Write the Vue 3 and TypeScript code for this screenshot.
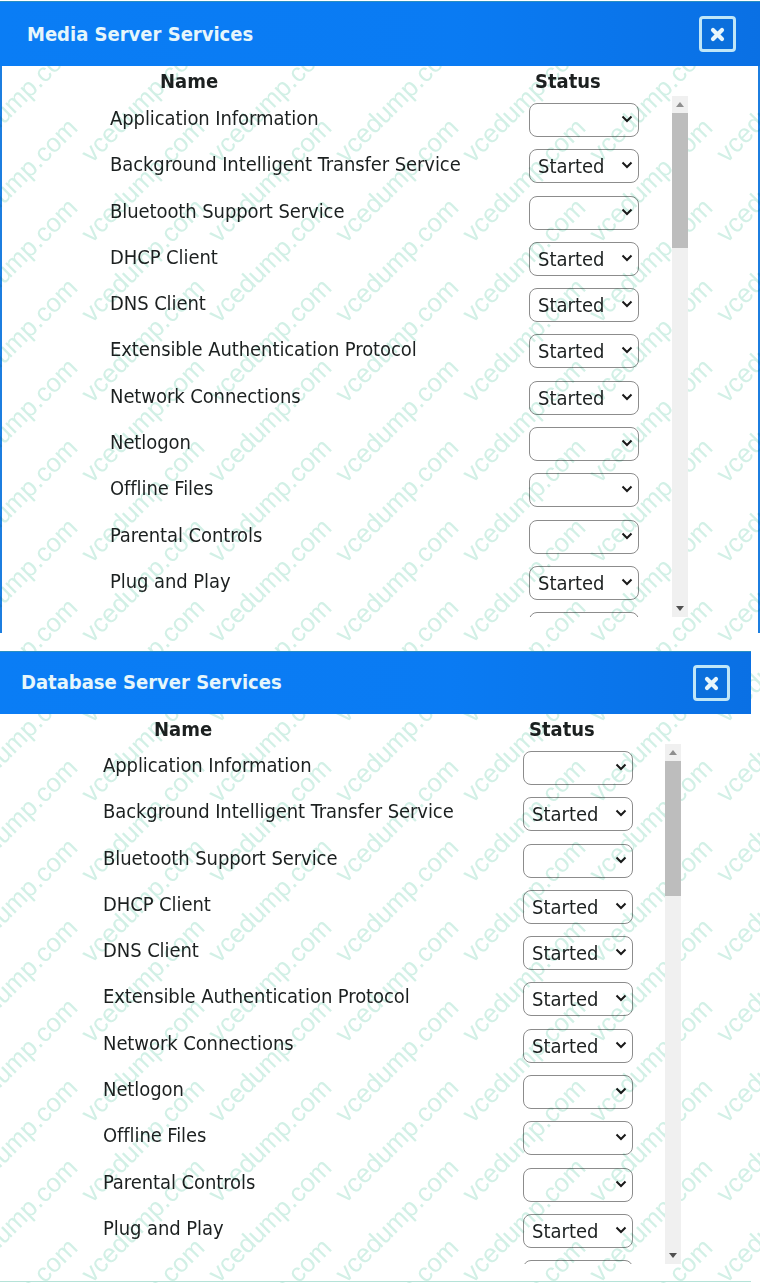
<script setup lang="ts">
interface Row { name: string; status: string }
const rows: Row[] = [
  { name: 'Application Information', status: '' },
  { name: 'Background Intelligent Transfer Service', status: 'Started' },
  { name: 'Bluetooth Support Service', status: '' },
  { name: 'DHCP Client', status: 'Started' },
  { name: 'DNS Client', status: 'Started' },
  { name: 'Extensible Authentication Protocol', status: 'Started' },
  { name: 'Network Connections', status: 'Started' },
  { name: 'Netlogon', status: '' },
  { name: 'Offline Files', status: '' },
  { name: 'Parental Controls', status: '' },
  { name: 'Plug and Play', status: 'Started' },
  { name: 'Print Spooler', status: '' },
]
const panels = [
  { title: 'Media Server Services', cls: 'media' },
  { title: 'Database Server Services', cls: 'database' },
]
const marks = Array.from({ length: 126 }, (_, i) => i)
</script>

<template>
  <div class="page">
    <section v-for="p in panels" :key="p.title" class="panel" :class="p.cls">
      <header class="head">
        <h2>{{ p.title }}</h2>
        <button class="close" type="button" aria-label="Close">
          <svg width="15" height="15" viewBox="0 0 15 15"><path d="M3 3 12 12M12 3 3 12" stroke="#e8f6fb" stroke-width="4.2" stroke-linecap="round" /></svg>
        </button>
      </header>
      <div class="cols">
        <div class="col-name">Name</div>
        <div class="col-status">Status</div>
      </div>
      <div class="body">
        <div class="list">
          <div v-for="r in rows" :key="r.name" class="row">
            <span class="name">{{ r.name }}</span>
            <div class="sel-wrap">
              <select class="sel" :value="r.status">
                <option value=""></option>
                <option value="Started">Started</option>
                <option value="Stopped">Stopped</option>
              </select>
              <svg class="chev" width="12" height="8" viewBox="0 0 12 8"><path d="M1.5 1.5 6 6 10.5 1.5" fill="none" stroke="#1a1a1a" stroke-width="2" /></svg>
            </div>
          </div>
        </div>
        <div class="bar">
          <svg class="arrow" width="8" height="5" viewBox="0 0 8 5"><path d="M4 0 8 5H0Z" fill="#8f8f8f" /></svg>
          <div class="thumb"></div>
          <div class="rest"></div>
          <svg class="arrow" width="8" height="5" viewBox="0 0 8 5"><path d="M0 0H8L4 5Z" fill="#505050" /></svg>
        </div>
      </div>
    </section>
    <div class="marks" aria-hidden="true">
      <div v-for="m in marks" :key="m" class="tile"><span>vcedump.com</span></div>
    </div>
  </div>
</template>

<style>
html, body { margin: 0; background: #fff; }
</style>

<style scoped>
.page {
  position: relative;
  width: 760px;
  height: 1283px;
  overflow: hidden;
  background: #fff;
  font-family: "DejaVu Sans Condensed", "Noto Sans", sans-serif;
  color: #1c2020;
}
.panel { box-sizing: border-box; }
.media {
  width: 760px;
  height: 632px;
  margin-top: 1px;
  border-left: 2px solid #1c7ee0;
  border-right: 2px solid #1c7ee0;
}
.database {
  width: 751px;
  height: 631px;
  margin-top: 18px;
  border-bottom: 1px solid #b5e3d8;
}
.head {
  position: relative;
  z-index: 1;
  display: flex;
  align-items: center;
  justify-content: space-between;
  background: linear-gradient(90deg, #0a7df5 0%, #0a7bf3 60%, #0a70e4 100%);
  border-top: 1px solid #2a8fc0;
  box-sizing: border-box;
}
.media .head { height: 65px; margin: 0 -2px; padding: 0 24px 0 27px; }
.database .head { height: 63px; padding: 0 21px 2px 21px; }
.database .close { margin-top: 2px; }
h2 {
  margin: 0;
  font-size: 20px;
  font-weight: 700;
  color: #e6f6fb;
}
.close {
  width: 37px;
  height: 36px;
  padding: 0;
  display: flex;
  align-items: center;
  justify-content: center;
  background: #0b6fdc;
  border: 3px solid #bfe6f8;
  border-radius: 4px;
}
.cols {
  display: flex;
  font-size: 20px;
  font-weight: 700;
  line-height: 30px;
  height: 30px;
}
.media .cols { padding-left: 158px; }
.database .cols { padding-left: 154px; }
.col-name { width: 375px; }
.body { display: flex; }
.list {
  overflow: hidden;
  box-sizing: border-box;
}
.media .body { height: 521px; }
.database .body { height: 520px; }
.media .list { width: 670px; padding: 7px 0 0 108px; }
.database .list { width: 665px; padding: 7px 0 0 103px; }
.row {
  display: flex;
  align-items: flex-start;
  height: 46.3px;
}
.name {
  width: 419px;
  flex: none;
  font-size: 20px;
  line-height: 30px;
  letter-spacing: -0.08px;
  white-space: nowrap;
}
.database .name { width: 420px; margin-top: -1px; }
.sel-wrap {
  position: relative;
  width: 110px;
  height: 34px;
  flex: none;
}
.sel {
  display: block;
  width: 100%;
  height: 100%;
  box-sizing: border-box;
  padding: 0 8px;
  appearance: none;
  font-family: inherit;
  font-size: 20px;
  color: #1c2020;
  background: transparent;
  border: 1px solid #8c8c8c;
  border-radius: 8px;
}
.chev {
  position: absolute;
  right: 6px;
  top: 12px;
  pointer-events: none;
}
.bar {
  position: relative;
  z-index: 1;
  width: 16px;
  display: flex;
  flex-direction: column;
  align-items: center;
  background: #f0f0f0;
  flex: none;
}
.arrow { flex: none; margin: 6px 0; }
.thumb { width: 100%; height: 135px; background: #bdbdbd; flex: none; }
.rest { flex: 1; }
.marks {
  position: absolute;
  z-index: 0;
  left: -48px;
  top: 60px;
  width: 889px;
  display: grid;
  grid-template-columns: repeat(7, 127px);
  grid-auto-rows: 80px;
  pointer-events: none;
  mix-blend-mode: multiply;
}
.tile {
  display: flex;
  align-items: center;
  justify-content: center;
}
.tile span {
  font-family: "Liberation Sans", sans-serif;
  font-size: 26px;
  color: #d2f0e6;
  white-space: nowrap;
  transform: rotate(-45deg);
}
</style>
